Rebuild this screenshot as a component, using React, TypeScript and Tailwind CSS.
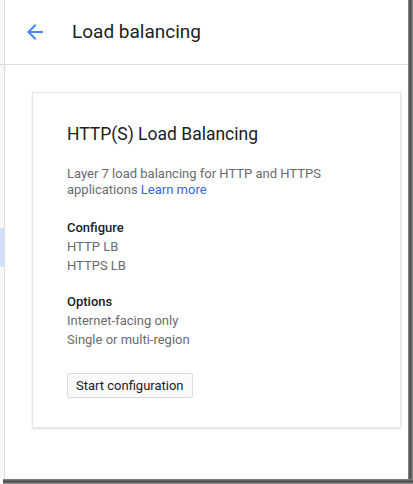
import React from 'react';

const ArrowBack: React.FC = () => (
  <svg width="24" height="24" viewBox="0 0 24 24" fill="#4285f4">
    <path d="M20 11H7.83l5.59-5.59L12 4l-8 8 8 8 1.41-1.41L7.83 13H20v-2z" />
  </svg>
);

export default function App() {
  return (
    <div className="w-[413px] h-[484px] flex flex-col bg-white font-['Roboto',sans-serif] overflow-hidden">
      <div className="flex flex-1 min-h-0">
        {/* collapsed side nav */}
        <div className="w-[5px] flex flex-col border-r border-[#dcdcdc] bg-[#f7f7f7]">
          <div className="h-[65px] border-b border-[#dcdcdc]" />
          <div className="h-[163px]" />
          <div className="h-[39px] bg-[#d3e0f7]" />
        </div>

        <div className="flex-1 flex flex-col">
          <header className="h-[65px] flex items-center border-b border-[#dcdcdc]">
            <div className="ml-[18px] w-[24px] h-[24px]">
              <ArrowBack />
            </div>
            <h1 className="ml-[25px] text-[19px] leading-[24px] text-[#202124] mt-[-1px]">Load balancing</h1>
          </header>

          <div className="pt-[27px] pl-[27px] pr-[7px]">
            <div className="w-[369px] border border-[#e6e6e6] shadow-[0_1px_2px_rgba(0,0,0,0.12)] pt-[29px] pb-[29px] pl-[34px] pr-[30px]">
              <h2 className="text-[17.5px] leading-[24px] text-[#202124]">HTTP(S) Load Balancing</h2>
              <p className="mt-[20px] text-[13px] leading-[16px] text-[#6b6b6b]">
                Layer 7 load balancing for HTTP and HTTPS applications <span className="text-[#3367d6]">Learn more</span>
              </p>

              <div className="mt-[20px] text-[13px] leading-[19px]">
                <div className="font-medium text-[#202124]">Configure</div>
                <div className="text-[#6b6b6b]">HTTP LB</div>
                <div className="text-[#6b6b6b]">HTTPS LB</div>
              </div>

              <div className="mt-[17px] text-[13px] leading-[19px]">
                <div className="font-medium text-[#202124]">Options</div>
                <div className="text-[#6b6b6b]">Internet-facing only</div>
                <div className="text-[#6b6b6b]">Single or multi-region</div>
              </div>

              <button className="mt-[24px] h-[25px] px-[8px] text-[13px] leading-[23px] text-[#202124] bg-[#fafafa] border border-[#dadce0] rounded-[2px]">
                Start configuration
              </button>
            </div>
          </div>
        </div>

        {/* window shadow right */}
        <div className="w-[5px] bg-gradient-to-r from-[#8a8a8a] via-[#4a4a4a] to-[#9a9a9a]" />
      </div>
      <div className="h-[5px] ml-[3px] bg-gradient-to-b from-[#8a8a8a] via-[#4a4a4a] to-[#9a9a9a]" />
    </div>
  );
}
